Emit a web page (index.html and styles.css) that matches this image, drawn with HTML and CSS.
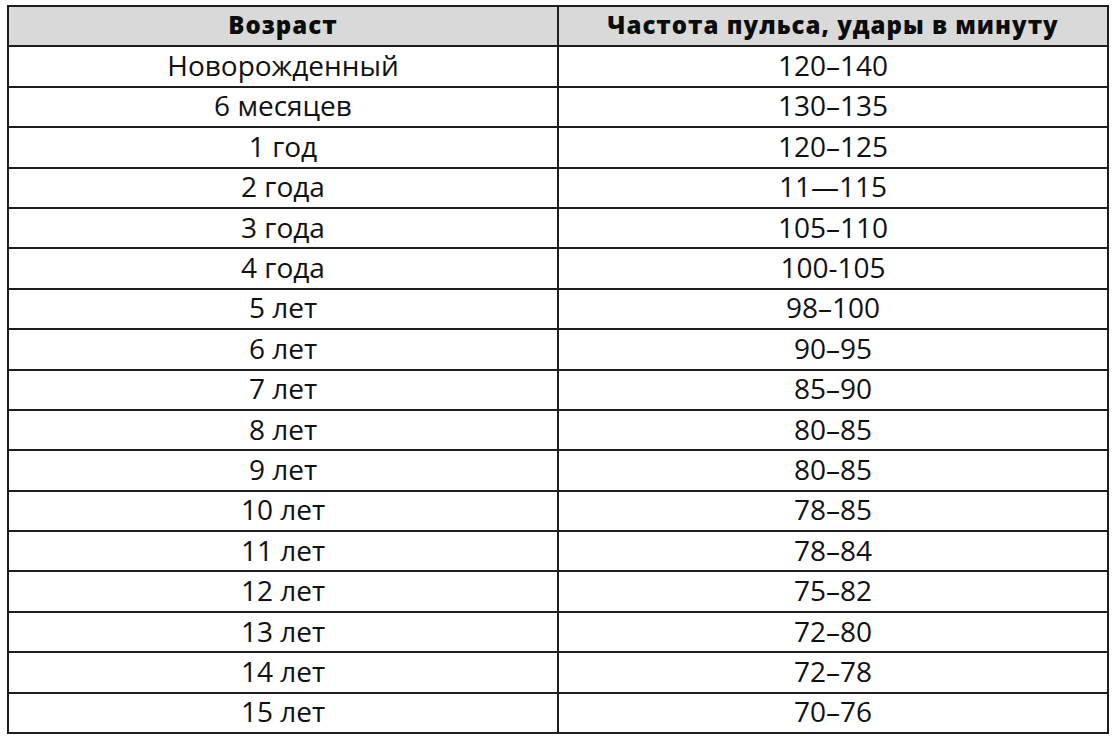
FILE: index.html
```html
<!DOCTYPE html>
<html lang="ru">
<head>
<meta charset="utf-8">
<link rel="stylesheet" href="styles.css">
</head>
<body>
<table class="pulse">
  <thead>
    <tr><th>Возраст</th><th>Частота пульса, удары в минуту</th></tr>
  </thead>
  <tbody>
    <tr><td>Новорожденный</td><td>120–140</td></tr>
    <tr><td>6 месяцев</td><td>130–135</td></tr>
    <tr><td>1 год</td><td>120–125</td></tr>
    <tr><td>2 года</td><td>11—115</td></tr>
    <tr><td>3 года</td><td>105–110</td></tr>
    <tr><td>4 года</td><td>100-105</td></tr>
    <tr><td>5 лет</td><td>98–100</td></tr>
    <tr><td>6 лет</td><td>90–95</td></tr>
    <tr><td>7 лет</td><td>85–90</td></tr>
    <tr><td>8 лет</td><td>80–85</td></tr>
    <tr><td>9 лет</td><td>80–85</td></tr>
    <tr><td>10 лет</td><td>78–85</td></tr>
    <tr><td>11 лет</td><td>78–84</td></tr>
    <tr><td>12 лет</td><td>75–82</td></tr>
    <tr><td>13 лет</td><td>72–80</td></tr>
    <tr><td>14 лет</td><td>72–78</td></tr>
    <tr><td>15 лет</td><td>70–76</td></tr>
  </tbody>
</table>
</body>
</html>
```
FILE: styles.css
```css
html, body {
  margin: 0;
  padding: 0;
  background: #ffffff;
}
body {
  padding: 5px 0 0 7px;
  font-family: "Open Sans", "Liberation Sans", sans-serif;
  color: #111111;
}
.pulse {
  border-collapse: collapse;
  width: 1102px;
  table-layout: fixed;
}
.pulse th,
.pulse td {
  border: 2px solid #1e1e1e;
  height: 35.4px;
  padding: 0 0 3px 0;
  text-align: center;
  vertical-align: middle;
  font-size: 28px;
  line-height: 1;
}
.pulse th {
  background: #d9d9d9;
  font-weight: 800;
  font-size: 24px;
  letter-spacing: 1px;
  color: #0c0c0c;
  height: 36.4px;
  padding-bottom: 2px;
}
```
